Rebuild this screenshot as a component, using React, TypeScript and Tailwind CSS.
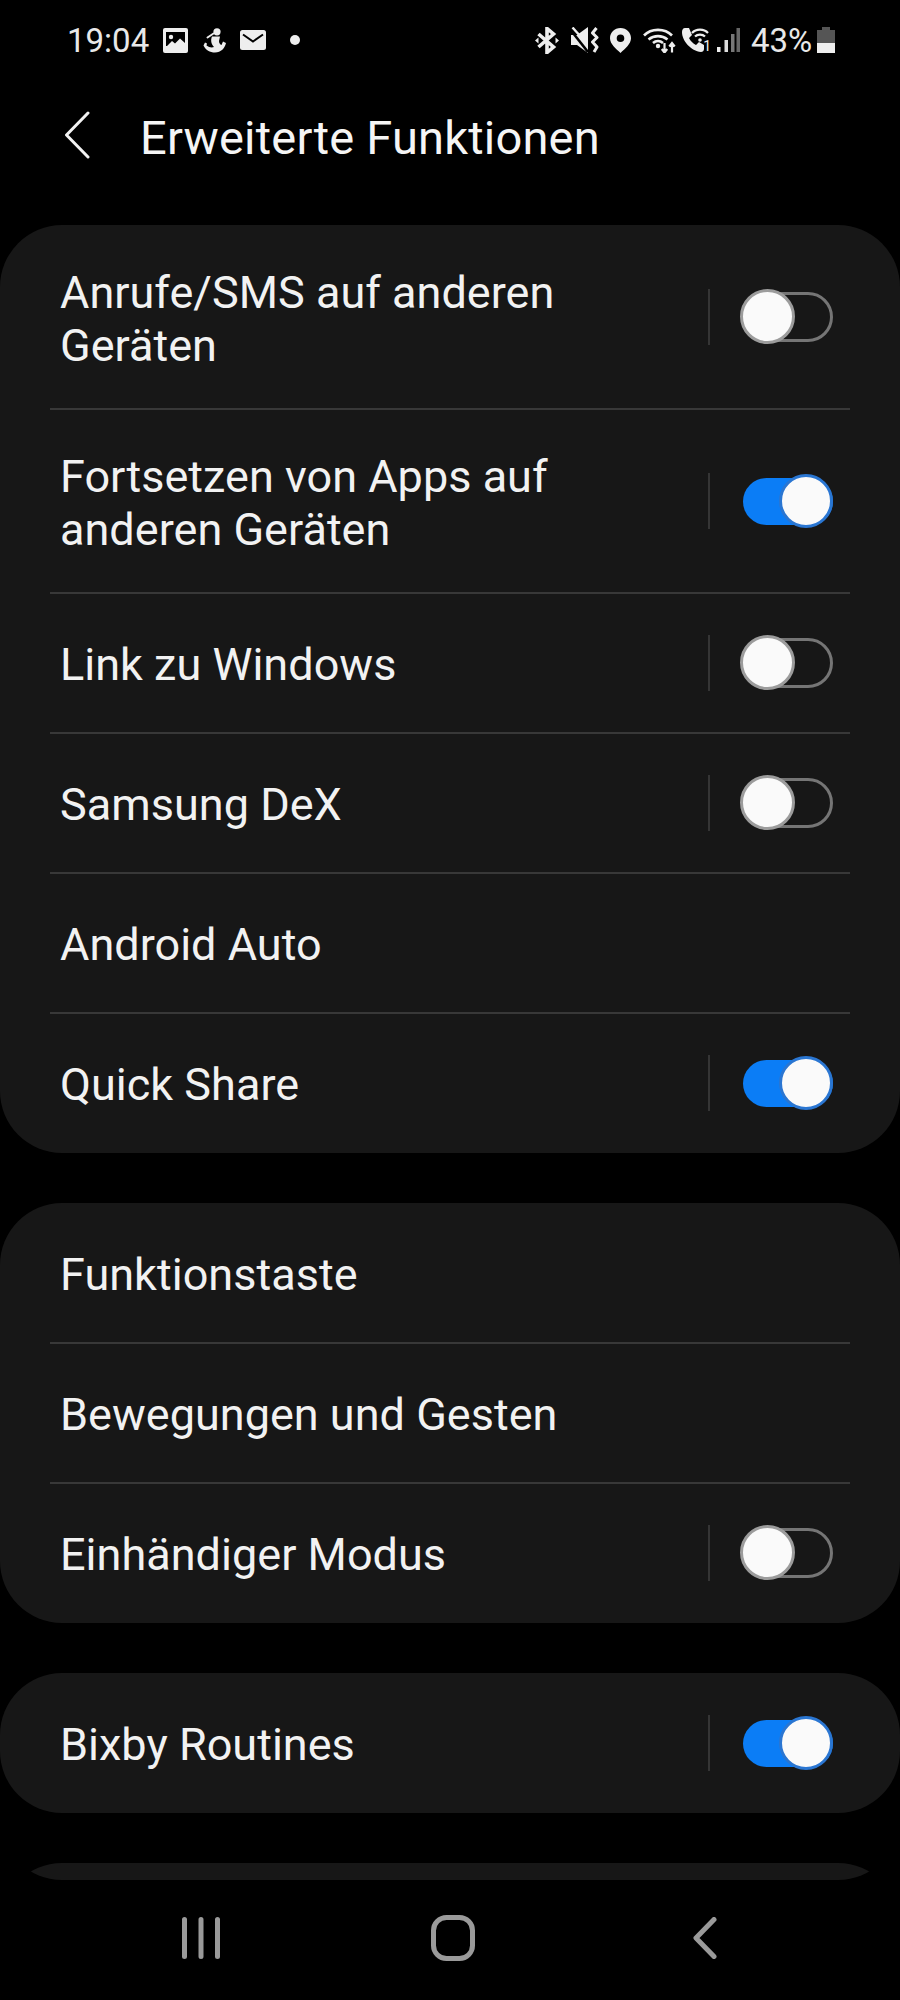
const FONT = "font-['Roboto','Noto_Sans',sans-serif]";

function Toggle({ on }: { on: boolean }) {
  if (on) {
    return (
      <div className="relative w-[92px] h-[56px] flex items-center">
        <div className="ml-[2px] w-[90px] h-[47px] rounded-full bg-[#0b7df6]" />
        <div className="absolute right-0 top-px w-[54px] h-[54px] rounded-full bg-[#fafafa] border-[3px] border-[#2a76d2]" />
      </div>
    );
  }
  return (
    <div className="relative w-[92px] h-[56px] flex items-center">
      <div className="ml-[2px] w-[90px] h-[50px] rounded-full border-[3px] border-[#757575]" />
      <div className="absolute -left-px top-0 w-[55px] h-[55px] rounded-full bg-[#fafafa] border-[3px] border-[#9c9c9c]" />
    </div>
  );
}

function Row({ lines, toggle, last }: { lines: string[]; toggle?: 'on' | 'off'; last?: boolean }) {
  return (
    <div className={lines.length > 1 ? 'h-[184px] relative' : 'h-[140px] relative'}>
      <div className="h-full flex items-center pl-[60px] pr-[67px]">
        <div className="flex-1 pt-[3px] text-[45px] leading-[53px] tracking-[0.02px] text-[#f2f2f2]">
          {lines.map((l) => (
            <div key={l}>{l}</div>
          ))}
        </div>
        {toggle && (
          <>
            <div className="w-[2px] h-[56px] bg-[#353535] mr-[31px]" />
            <Toggle on={toggle === 'on'} />
          </>
        )}
      </div>
      {!last && <div className="absolute -bottom-px left-[50px] right-[50px] h-[2px] bg-[#383838]" />}
    </div>
  );
}

function Card({ children }: { children: React.ReactNode }) {
  return <div className="bg-[#171717] rounded-[62px] overflow-hidden shrink-0">{children}</div>;
}

function StatusLeft() {
  return (
    <div className="flex items-center">
      <span className="text-[33px] leading-none text-[#e8e8e8] w-[96px]">19:04</span>
      <svg width="25" height="25" viewBox="0 0 25 25" className="mr-[15px]">
        <rect width="25" height="25" rx="2" fill="#eee" />
        <rect x="3" y="4" width="19" height="14" fill="#000" />
        <circle cx="8" cy="9" r="2.2" fill="#eee" />
        <path d="M3 19 L9 13 L12 15.5 L17 10.5 L22 15 V19 Z" fill="#eee" />
      </svg>
      <svg width="23" height="25" viewBox="0 0 23 25" className="mr-[14px]">
        <circle cx="14" cy="3.8" r="3.6" fill="#eee" />
        <path d="M10.5 5.5 L4.5 9.5" stroke="#eee" strokeWidth="2" strokeLinecap="round" />
        <path d="M9 8.5 H17 L16 13 C16 15 17 16.5 18.5 17 L20 13.5 L23 15 C22 20 18 24.5 12 24.5 C7 24.5 2.5 22 0.5 17.5 L2 14.5 L4 15.5 L3.5 17.5 C6 19.5 9 20 11 19 C8 16 7.5 12 9 8.5 Z" fill="#eee" />
      </svg>
      <svg width="26" height="20" viewBox="0 0 26 20" className="mr-[24px]">
        <rect width="26" height="20" rx="2.5" fill="#eee" />
        <path d="M3 4.5 L13 11.5 L23 4.5" fill="none" stroke="#000" strokeWidth="2" />
      </svg>
      <div className="w-[10px] h-[10px] rounded-full bg-[#eee]" />
    </div>
  );
}

function StatusRight() {
  return (
    <div className="flex items-center">
      <svg width="24" height="27" viewBox="0 0 24 27" className="mr-[12px]">
        <path d="M3.5 7 L18.5 20 L12 25.5 V1.5 L18.5 7 L3.5 20" fill="none" stroke="#eee" strokeWidth="3.6" />
        <path d="M0 13.5 L3.5 10.5 V16.5 Z M24 13.5 L20.5 10.5 V16.5 Z" fill="#eee" />
      </svg>
      <svg width="28" height="26" viewBox="0 0 28 26" className="mr-[11px]">
        <path d="M0 8 H6 L17 0 V26 L6 18 H0 Z" fill="#eee" />
        <path d="M0 3.5 L17 25" stroke="#000" strokeWidth="2.6" />
        <path d="M1.5 0.5 L10 10" stroke="#eee" strokeWidth="2.4" />
        <path d="M25.5 1 L21.5 6 L26 10.5 L21.5 15 L26 20 L23 25" fill="none" stroke="#eee" strokeWidth="3" strokeLinejoin="round" />
      </svg>
      <svg width="21" height="25" viewBox="0 0 21 25" className="mr-[12px]">
        <path fillRule="evenodd" d="M10.5 0 C16.5 0 21 4.5 21 10.2 C21 16 15 20.5 10.5 25 C6 20.5 0 16 0 10.2 C0 4.5 4.5 0 10.5 0 Z M10.5 6.5 A3.8 3.8 0 1 0 10.5 14.1 A3.8 3.8 0 1 0 10.5 6.5 Z" fill="#eee" />
      </svg>
      <svg width="33" height="26" viewBox="0 0 33 26" className="mr-[5px]">
        <path d="M1 8.5 C8 1 22 1 29 8.5 M5.5 12.5 C11 8 19 8 24.5 12.5 M10 16 C13 13.5 17 13.5 20 16" fill="none" stroke="#eee" strokeWidth="2.6" />
        <circle cx="15" cy="19" r="2.2" fill="#eee" />
        <path d="M21.5 16 V25 M18.8 22 L21.5 25.5 L24.2 22 M29 25.5 V16.5 M26.3 19.5 L29 16 L31.7 19.5" fill="none" stroke="#eee" strokeWidth="2.2" />
      </svg>
      <div className="relative w-[30px] h-[26px] mr-[5px]">
        <svg width="30" height="26" viewBox="0 0 30 26">
          <path d="M4 1 L8 1 L11 8 L8 11 C9.5 14 12 16.5 15 18 L18 15 L23 18 V22 C23 24 21.5 25 20 25 C10 24 1 14 1 5 C1 3 2 1 4 1 Z" fill="#eee" />
          <path d="M11 6 C15 1.5 23 1.5 27 6 M14 9.5 C16.5 7 21.5 7 24 9.5" fill="none" stroke="#eee" strokeWidth="2.2" />
          <circle cx="19" cy="13" r="1.8" fill="#eee" />
        </svg>
        <span className="absolute right-0 bottom-0 text-[14px] leading-[14px] text-[#eee]">1</span>
      </div>
      <svg width="24" height="25" viewBox="0 0 24 25" className="mr-[11px]">
        <rect x="1" y="19" width="3.5" height="5" fill="#eee" />
        <rect x="8.5" y="12" width="3.5" height="12" fill="#ddd" />
        <rect x="15" y="6" width="3.5" height="18" fill="#777" />
        <rect x="20.5" y="0" width="3.5" height="24" fill="#666" />
      </svg>
      <span className="text-[33px] leading-none text-[#e8e8e8] w-[66px]">43%</span>
      <svg width="18" height="26" viewBox="0 0 18 26">
        <path d="M5 0 H13 V3 H18 V16 H0 V3 H5 Z" fill="#555" />
        <rect y="16" width="18" height="10" fill="#eee" />
      </svg>
    </div>
  );
}

export default function App() {
  return (
    <div className={`w-[900px] h-[2000px] bg-black flex flex-col overflow-hidden ${FONT}`}>
      {/* Status bar */}
      <div className="h-[80px] shrink-0 flex items-center justify-between pl-[67px] pr-[65px]">
        <StatusLeft />
        <StatusRight />
      </div>

      {/* Header */}
      <div className="h-[145px] shrink-0 flex items-start pl-[64px] pt-[28px]">
        <svg width="26" height="48" viewBox="0 0 26 48" className="mt-[3px] mr-[50px]">
          <path d="M24 2 L2.5 24 L24 46" fill="none" stroke="#f2f2f2" strokeWidth="3" strokeLinecap="round" strokeLinejoin="round" />
        </svg>
        <span className="mt-[2px] text-[47px] leading-[56px] tracking-[0.2px] text-[#f5f5f5]">Erweiterte Funktionen</span>
      </div>

      {/* Settings list */}
      <div className="h-[1655px] shrink-0 overflow-hidden rounded-b-[62px] flex flex-col gap-[50px]">
        <Card>
          <Row lines={['Anrufe/SMS auf anderen', 'Geräten']} toggle="off" />
          <Row lines={['Fortsetzen von Apps auf', 'anderen Geräten']} toggle="on" />
          <Row lines={['Link zu Windows']} toggle="off" />
          <Row lines={['Samsung DeX']} toggle="off" />
          <Row lines={['Android Auto']} />
          <Row lines={['Quick Share']} toggle="on" last />
        </Card>
        <Card>
          <Row lines={['Funktionstaste']} />
          <Row lines={['Bewegungen und Gesten']} />
          <Row lines={['Einhändiger Modus']} toggle="off" last />
        </Card>
        <Card>
          <Row lines={['Bixby Routines']} toggle="on" last />
        </Card>
        {/* next card is scrolled almost out of view, only its top edge shows */}
        <div className="bg-[#171717] rounded-[62px] h-[140px] shrink-0" />
      </div>

      {/* Nav bar */}
      <div className="flex-1 flex items-start pt-[37px] pl-[182px]">
        <svg width="38" height="42" viewBox="0 0 38 42" className="mr-[211px]">
          <path d="M2.5 2.5 V39.5 M19 2.5 V39.5 M35.5 2.5 V39.5" stroke="#9a9a9a" strokeWidth="5" strokeLinecap="round" />
        </svg>
        <svg width="44" height="46" viewBox="0 0 44 46" className="mr-[218px] -mt-[2px]">
          <rect x="2.5" y="2.5" width="39" height="41" rx="13" fill="none" stroke="#9a9a9a" strokeWidth="5" />
        </svg>
        <svg width="24" height="42" viewBox="0 0 24 42">
          <path d="M21 2.5 L3 21 L21 39.5" fill="none" stroke="#9a9a9a" strokeWidth="5" strokeLinecap="round" strokeLinejoin="round" />
        </svg>
      </div>
    </div>
  );
}
